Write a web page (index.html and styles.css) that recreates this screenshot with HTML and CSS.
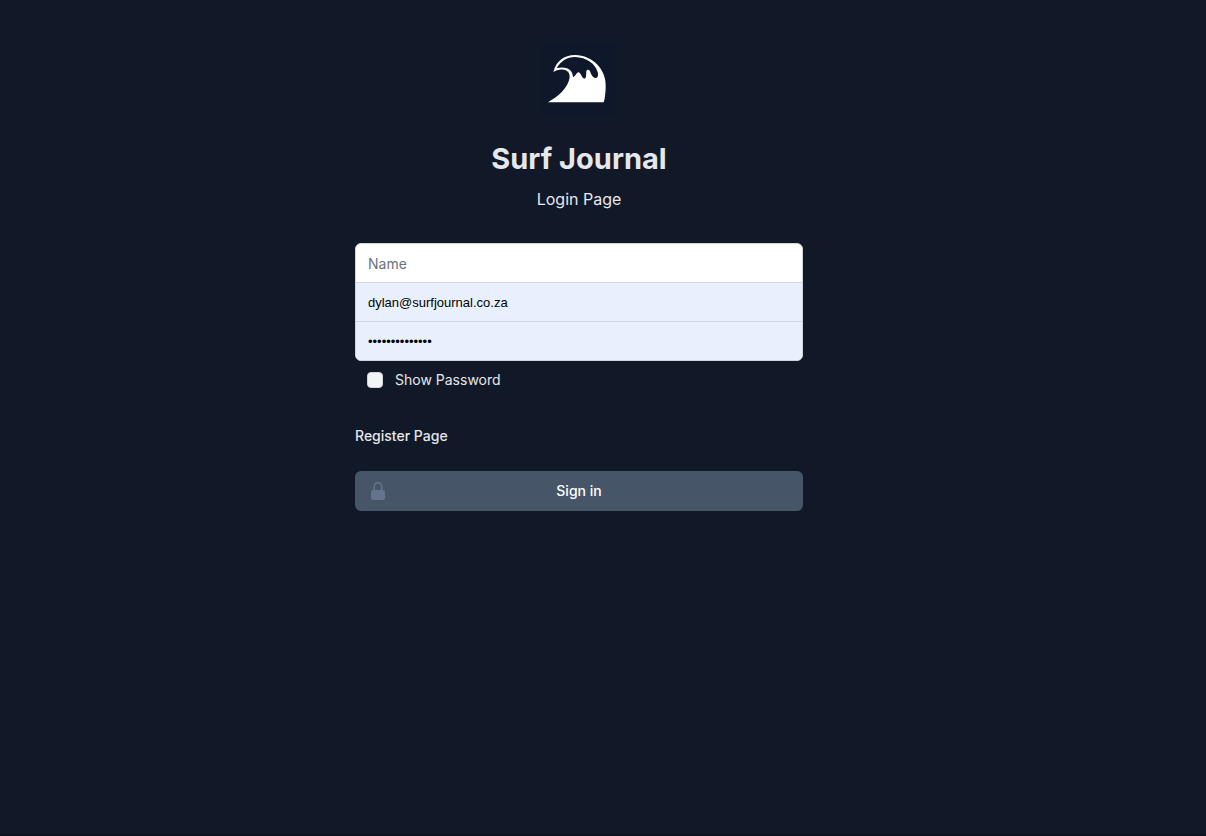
FILE: index.html
```html
<!DOCTYPE html>
<html lang="en">
<head>
<meta charset="utf-8">
<meta name="viewport" content="width=device-width, initial-scale=1">
<title>Surf Journal</title>
<link rel="stylesheet" href="styles.css">
</head>
<body>
<main class="page">
  <div class="panel">
    <header class="intro">
      <svg class="logo" viewBox="39 24 228 216" role="img" aria-label="Surf Journal logo">
        <path fill="#fff" fill-rule="evenodd" d="M60 202C88 186 121 160 125 127C126 109 112 101 96 104C88 105 82 107 76 111C84 79 108 60 141 60C194 61 237 104 233 158C232 175 231 191 227 202ZM86 99C98 80 116 66 141 66C175 67 202 86 208 109C212 119 210 128 204 129C196 129 190 121 187 111C184 103 176 102 175 109C174 118 176 130 169 131C162 131 159 114 152 112C146 111 143 124 135 127C135 109 122 92 86 99Z"/>
      </svg>
      <h1 class="title">Surf Journal</h1>
      <p class="subtitle">Login Page</p>
    </header>
    <form class="form">
      <div class="fields">
        <input class="field" type="text" name="name" placeholder="Name" aria-label="Name">
        <input class="field filled" type="email" name="email" value="dylan@surfjournal.co.za" aria-label="Email address">
        <input class="field filled" type="password" name="password" value="surfjournal123" aria-label="Password">
      </div>
      <div class="show">
        <input class="check" type="checkbox" id="show-password">
        <label for="show-password">Show Password</label>
      </div>
      <a class="register" href="#register">Register Page</a>
      <button class="submit" type="submit">
        <svg class="lock" viewBox="0 0 20 20" aria-hidden="true"><path fill="currentColor" fill-rule="evenodd" d="M10 1a4.5 4.5 0 0 0-4.500 4.500V9H5a2 2 0 0 0-2 2v6a2 2 0 0 0 2 2h10a2 2 0 0 0 2-2v-6a2 2 0 0 0-2-2h-.5V5.500A4.500 4.500 0 0 0 10 1Zm3 8V5.500a3 3 0 1 0-6 0V9h6Z"/></svg>
        Sign in
      </button>
    </form>
  </div>
</main>
</body>
</html>
```
FILE: styles.css
```css
* { box-sizing: border-box; }

body {
  margin: 0;
  background: #111827;
  color: #e5e7eb;
  font-family: Inter, "Liberation Sans", sans-serif;
  font-size: 14px;
  line-height: 20px;
}

.page {
  display: flex;
  justify-content: center;
  min-height: 100vh;
  padding: 43px 48px 43px 0;
  border-bottom: 2px solid #0f1422;
}

.panel { width: 100%; max-width: 448px; }

.intro {
  display: flex;
  flex-direction: column;
  align-items: center;
}

.logo {
  width: 76px;
  height: 72px;
  background: #0f172a;
}

.title {
  margin: 26px 0 0;
  font-size: 29px;
  line-height: 36px;
  font-weight: 700;
}

.subtitle {
  margin: 10px 0 0;
  font-size: 16px;
  line-height: 24px;
}

.form {
  display: flex;
  flex-direction: column;
  margin-top: 32px;
}

.fields {
  border: 1px solid #d1d5db;
  border-radius: 6px;
  background: #fff;
  overflow: hidden;
}

.field {
  display: block;
  width: 100%;
  height: 38px;
  margin: 0;
  padding: 8px 12px;
  border: 0;
  background: #fff;
  color: #000;
  font: inherit;
  outline: none;
}

.field::placeholder { color: #6b7280; opacity: 1; }

.field.filled {
  height: 39px;
  border-top: 1px solid #d1d5db;
  background: #e8f0fe;
  font-family: "Liberation Sans", Arial, sans-serif;
  font-size: 13px;
}

.show {
  display: flex;
  align-items: center;
  gap: 12px;
  padding: 9px 12px 0;
}

.check {
  appearance: none;
  width: 16px;
  height: 16px;
  margin: 0;
  border: 1px solid #d1d5db;
  border-radius: 4px;
  background: #f3f4f6;
}

.check:checked { background: #475569; }

.register {
  align-self: flex-start;
  margin-top: 36px;
  color: inherit;
  font-weight: 500;
  text-decoration: none;
}

.submit {
  position: relative;
  width: 100%;
  margin-top: 25px;
  padding: 10px 16px;
  border: 0;
  border-radius: 6px;
  background: #475569;
  color: #fff;
  font: inherit;
  font-weight: 500;
  cursor: pointer;
}

.lock {
  position: absolute;
  left: 13px;
  top: 10px;
  width: 20px;
  height: 20px;
  color: #64748b;
}
```
